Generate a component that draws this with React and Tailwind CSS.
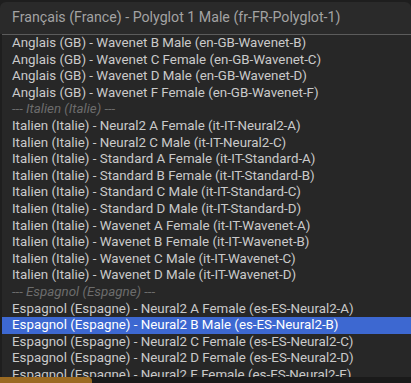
import React from "react";

const rows = [
  { t: "Anglais (GB) - Wavenet B Male (en-GB-Wavenet-B)" },
  { t: "Anglais (GB) - Wavenet C Female (en-GB-Wavenet-C)" },
  { t: "Anglais (GB) - Wavenet D Male (en-GB-Wavenet-D)" },
  { t: "Anglais (GB) - Wavenet F Female (en-GB-Wavenet-F)" },
  { t: "--- Italien (Italie) ---", group: true },
  { t: "Italien (Italie) - Neural2 A Female (it-IT-Neural2-A)" },
  { t: "Italien (Italie) - Neural2 C Male (it-IT-Neural2-C)" },
  { t: "Italien (Italie) - Standard A Female (it-IT-Standard-A)" },
  { t: "Italien (Italie) - Standard B Female (it-IT-Standard-B)" },
  { t: "Italien (Italie) - Standard C Male (it-IT-Standard-C)" },
  { t: "Italien (Italie) - Standard D Male (it-IT-Standard-D)" },
  { t: "Italien (Italie) - Wavenet A Female (it-IT-Wavenet-A)" },
  { t: "Italien (Italie) - Wavenet B Female (it-IT-Wavenet-B)" },
  { t: "Italien (Italie) - Wavenet C Male (it-IT-Wavenet-C)" },
  { t: "Italien (Italie) - Wavenet D Male (it-IT-Wavenet-D)" },
  { t: "--- Espagnol (Espagne) ---", group: true },
  { t: "Espagnol (Espagne) - Neural2 A Female (es-ES-Neural2-A)" },
  { t: "Espagnol (Espagne) - Neural2 B Male (es-ES-Neural2-B)", selected: true },
  { t: "Espagnol (Espagne) - Neural2 C Female (es-ES-Neural2-C)" },
  { t: "Espagnol (Espagne) - Neural2 D Female (es-ES-Neural2-D)" },
  { t: "Espagnol (Espagne) - Neural2 E Female (es-ES-Neural2-E)" },
];

export default function App() {
  return (
    <div className="w-[411px] h-[383px] bg-[#1e1e1e] overflow-hidden flex flex-col pt-[2px] font-['Roboto',sans-serif]">
      {/* select box */}
      <div className="h-[32px] shrink-0 bg-[#2a2a2a] rounded-t-[6px] px-[12px] pb-[1px] flex items-center text-[14.2px] text-[#a3a3a3]">
        Français (France) - Polyglot 1 Male (fr-FR-Polyglot-1)
      </div>

      {/* open list */}
      <div className="h-[343px] shrink-0 bg-[#272727] border-t border-[#5c5c5c] ml-[2px] overflow-hidden">
        {rows.map(r => (
          <div
            key={r.t}
            className={
              "h-[16.6px] leading-[16.6px] pl-[10px] text-[13.33px] whitespace-nowrap " +
              (r.group
                ? "italic text-[#6c6c6c]"
                : r.selected
                ? "bg-[#3d68d1] text-white"
                : "text-[#cacaca]")
            }
          >
            {r.t}
          </div>
        ))}
      </div>

      {/* page below */}
      <div className="flex-1 bg-[#1a1a1a] flex items-end">
        <div className="w-[92px] h-[6px] bg-[#9a6a22] rounded-tr-[4px]" />
      </div>
    </div>
  );
}
